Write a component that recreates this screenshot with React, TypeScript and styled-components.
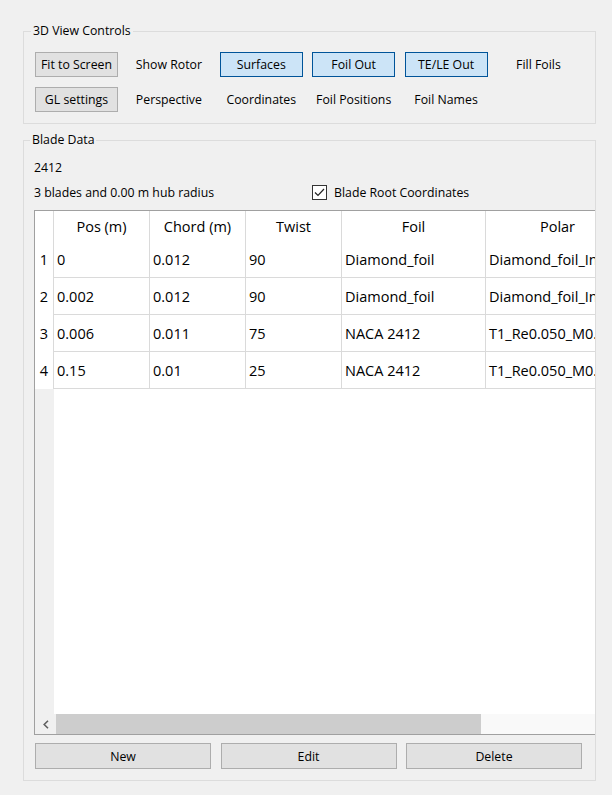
import React from "react";
import styled, { createGlobalStyle } from "styled-components";

const GlobalStyle = createGlobalStyle`
  html, body {
    margin: 0;
    padding: 0;
    background: #f0f0f0;
  }
  body {
    font-family: "Open Sans", "Noto Sans", sans-serif;
    color: #000;
  }
  * { box-sizing: border-box; }
`;

const Page = styled.div`
  width: 612px;
  height: 795px;
  padding: 23px 0 0 23px;
  overflow: hidden;
`;

const GroupBox = styled.fieldset<{ $pad: string; $mt?: number }>`
  width: 573px;
  margin: ${(p) => p.$mt ?? 0}px 0 0 0;
  padding: ${(p) => p.$pad};
  border: 1px solid #dcdcdc;
  min-width: 0;
`;

const Legend = styled.legend`
  font-size: 12.3px;
  line-height: 16px;
  padding: 0 2px;
  margin-left: -4px;
`;

const ControlGrid = styled.div`
  display: grid;
  grid-template-columns: repeat(6, 83px);
  grid-auto-rows: 25px;
  column-gap: 9.4px;
  row-gap: 9.5px;
`;

const Button = styled.button<{ $active?: boolean; $h?: number }>`
  height: ${(p) => p.$h ?? 25}px;
  margin: 0;
  padding: 0;
  font-family: inherit;
  font-size: 12.3px;
  color: #000;
  background: ${(p) => (p.$active ? "#cce4f7" : "#e1e1e1")};
  border: 1px solid ${(p) => (p.$active ? "#005499" : "#adadad")};
  border-radius: 0;
`;

const FlatToggle = styled.div`
  display: flex;
  align-items: center;
  justify-content: center;
  font-size: 12.3px;
`;

const InfoLine = styled.div`
  font-size: 12.3px;
  line-height: 16px;
  height: 16px;
`;

const InfoRow = styled.div`
  display: grid;
  grid-template-columns: 278px auto;
  align-items: center;
  height: 17px;
  margin-top: 8px;
  font-size: 12.3px;
`;

const CheckLabel = styled.label`
  display: flex;
  align-items: center;
  gap: 7px;
`;

const CheckBox = styled.span`
  width: 15px;
  height: 15px;
  border: 1px solid #333;
  background: #fff;
  display: flex;
  align-items: center;
  justify-content: center;
`;

const TableFrame = styled.div`
  margin-top: 9px;
  height: 525px;
  border: 1px solid #a0a0a0;
  border-right: none;
  display: flex;
  flex-direction: column;
  overflow: hidden;
  background: #fff;
`;

const Viewport = styled.div`
  flex: 1;
  display: flex;
  flex-direction: column;
  overflow: hidden;
`;

const Grid = styled.div`
  display: grid;
  grid-template-columns: 19px 96px 96px 96px 144px 144px;
  grid-template-rows: 30px repeat(4, 37px);
  font-size: 14.5px;
`;

const HeadCell = styled.div`
  display: flex;
  align-items: center;
  justify-content: center;
  border-right: 1px solid #dadada;
  white-space: nowrap;
  overflow: hidden;
`;

const RowHead = styled.div`
  display: flex;
  align-items: center;
  justify-content: center;
  border-right: 1px solid #dadada;
`;

const Cell = styled.div`
  display: flex;
  align-items: center;
  padding-left: 3px;
  border-right: 1px solid #dadada;
  border-bottom: 1px solid #dadada;
  white-space: nowrap;
  overflow: hidden;
`;

const HeaderFill = styled.div`
  flex: 1;
  width: 19px;
  background: #f0f0f0;
`;

const ScrollBar = styled.div`
  height: 20px;
  display: flex;
  background: #f9f9f9;
`;

const ArrowButton = styled.div`
  width: 21px;
  display: flex;
  align-items: center;
  justify-content: center;
  background: #f0f0f0;
`;

const Thumb = styled.div`
  width: 425px;
  background: #cdcdcd;
`;

const ButtonRow = styled.div`
  display: grid;
  grid-template-columns: repeat(3, 176px);
  column-gap: 9.5px;
  margin: 8px 0 0 1px;
`;

const rows = [
  ["1", "0", "0.012", "90", "Diamond_foil", "Diamond_foil_Inviscid"],
  ["2", "0.002", "0.012", "90", "Diamond_foil", "Diamond_foil_Inviscid"],
  ["3", "0.006", "0.011", "75", "NACA 2412", "T1_Re0.050_M0.00_N9.0"],
  ["4", "0.15", "0.01", "25", "NACA 2412", "T1_Re0.050_M0.00_N9.0"],
];

const headers = ["Pos (m)", "Chord (m)", "Twist", "Foil", "Polar"];

export default function App() {
  return (
    <>
      <GlobalStyle />
      <Page>
        <GroupBox $pad="13px 0 11.5px 11px">
          <Legend>3D View Controls</Legend>
          <ControlGrid>
            <Button>Fit to Screen</Button>
            <FlatToggle>Show Rotor</FlatToggle>
            <Button $active>Surfaces</Button>
            <Button $active>Foil Out</Button>
            <Button $active>TE/LE Out</Button>
            <FlatToggle>Fill Foils</FlatToggle>
            <Button>GL settings</Button>
            <FlatToggle>Perspective</FlatToggle>
            <FlatToggle>Coordinates</FlatToggle>
            <FlatToggle>Foil Positions</FlatToggle>
            <FlatToggle>Foil Names</FlatToggle>
          </ControlGrid>
        </GroupBox>
        <GroupBox $pad="12px 0 11px 10px" $mt={8}>
          <Legend>Blade Data</Legend>
          <InfoLine>2412</InfoLine>
          <InfoRow>
            <span>3 blades and 0.00 m hub radius</span>
            <CheckLabel>
              <CheckBox>
                <svg width="11" height="9" viewBox="0 0 11 9">
                  <path d="M1 4.5 L4 7.5 L10 1" fill="none" stroke="#222" strokeWidth="1.2" />
                </svg>
              </CheckBox>
              Blade Root Coordinates
            </CheckLabel>
          </InfoRow>
          <TableFrame>
            <Viewport>
              <Grid>
                <HeadCell />
                {headers.map((h) => (
                  <HeadCell key={h}>{h}</HeadCell>
                ))}
                {rows.map((r) => (
                  <React.Fragment key={r[0]}>
                    <RowHead>{r[0]}</RowHead>
                    {r.slice(1).map((c, i) => (
                      <Cell key={i}>{c}</Cell>
                    ))}
                  </React.Fragment>
                ))}
              </Grid>
              <HeaderFill />
            </Viewport>
            <ScrollBar>
              <ArrowButton>
                <svg width="6" height="9" viewBox="0 0 6 9">
                  <path d="M5 0.8 L1.2 4.5 L5 8.2" fill="none" stroke="#606060" strokeWidth="1.6" />
                </svg>
              </ArrowButton>
              <Thumb />
            </ScrollBar>
          </TableFrame>
          <ButtonRow>
            <Button $h={26}>New</Button>
            <Button $h={26}>Edit</Button>
            <Button $h={26}>Delete</Button>
          </ButtonRow>
        </GroupBox>
      </Page>
    </>
  );
}
